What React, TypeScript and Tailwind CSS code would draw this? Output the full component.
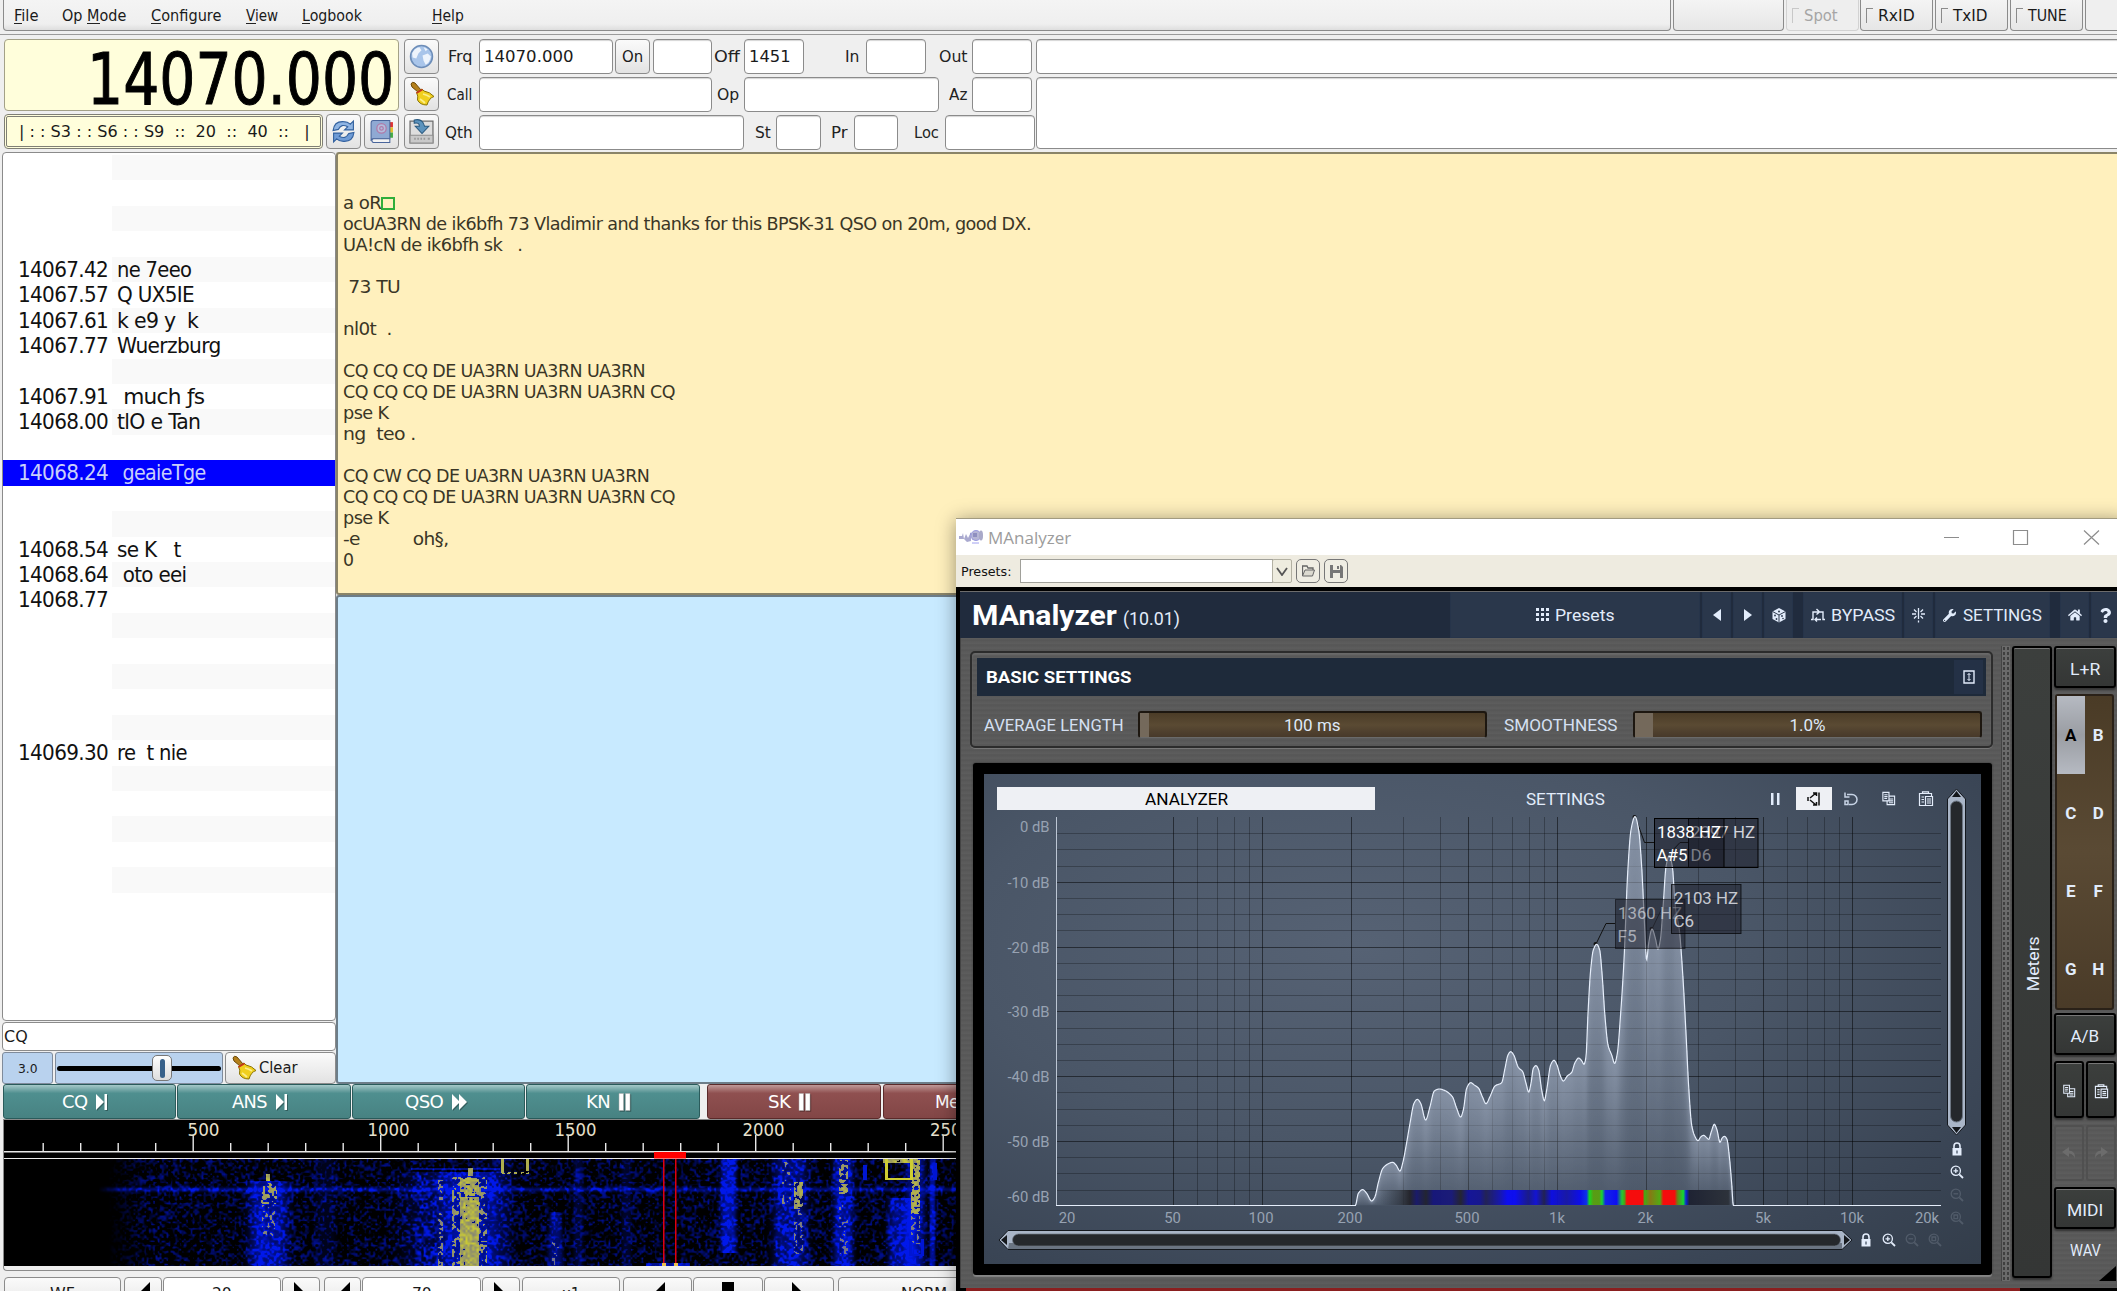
import React, { useLayoutEffect, useRef, useState, useEffect } from "react";
import { FaWrench, FaHome, FaQuestion } from "react-icons/fa";

/* Text squeezed or stretched horizontally to an exact advance width. */
function Fit({ w, children, className = "" }: { w: number; children: string; className?: string }) {
  const ref = useRef<HTMLSpanElement>(null);
  const [k, setK] = useState(1);
  useLayoutEffect(() => {
    if (ref.current) setK(w / ref.current.offsetWidth);
  }, [w, children]);
  return (
    <span className={`inline-block shrink-0 whitespace-pre ${className}`} style={{ width: w }}>
      <span ref={ref} className="inline-block origin-left" style={{ transform: `translateY(1px) scaleX(${k})` }}>
        {children}
      </span>
    </span>
  );
}

const raised = "border border-[#8b8b8b] rounded-[4px] bg-gradient-to-b from-[#fafafa] via-[#efefef] to-[#e2e2e2]";
const sunken = "border border-[#8b8b8b] rounded-[4px] bg-white shadow-[inset_0_2px_1px_-1px_#d5d5d5]";

function Broom({ className = "" }: { className?: string }) {
  return (
    <svg viewBox="0 0 26 26" className={className}>
      <path d="M2 3 Q3 0 6 2 L12 9 L9 11 L3 6 Z" fill="#b4801c" stroke="#6d4a08" strokeWidth="1" />
      <path d="M7.5 11.5 L13 8 L15 10 Q21 11 25 15.5 Q20 17 18 24 Q11 24 8.500 19 Q9.500 15 7.500 11.500Z" fill="#f0cf1e" stroke="#8a7405" strokeWidth="1" />
      <path d="M11 18 Q14 20 16 22 M14 13 Q18 14 21 16" stroke="#fbee8a" strokeWidth="1.800" fill="none" />
      <path d="M7.500 12 L13.500 8.500" stroke="#c8331c" strokeWidth="1.600" />
    </svg>
  );
}
function Globe() {
  return (
    <svg viewBox="0 0 24 24" className="size-[25px]">
      <circle cx="12" cy="12" r="10.500" fill="#a9c5ea" stroke="#6d8db8" strokeWidth="1.500" />
      <path d="M3 9 Q5 4 10 3 L12 6 L9 9 L7 14 L3.500 13Z M13 11 L18 9 L21 12 Q20 18 16 20 L14 16Z M14 3 L18 5 L16 7Z" fill="#eef4fc" />
    </svg>
  );
}
function Refresh() {
  return (
    <svg viewBox="0 0 24 24" className="size-[25px]">
      <path d="M2 11 Q3 2 12 2.500 Q16 2.500 18.500 5 L21.500 2 L21.500 10.500 L13 10.500 L16 7.500 Q10 4 7 10Z" fill="#8fb4e3" stroke="#33619f" strokeWidth="1.100" />
      <path d="M22 13 Q21 22 12 21.500 Q8 21.500 5.500 19 L2.500 22 L2.500 13.500 L11 13.500 L8 16.500 Q14 20 17 14Z" fill="#6f9bd6" stroke="#33619f" strokeWidth="1.100" />
    </svg>
  );
}
function Book() {
  return (
    <svg viewBox="0 0 24 24" className="size-[25px]">
      <path d="M20 3h3v5h-3z" fill="#d33" /><path d="M20 8h3v5h-3z" fill="#e6c02a" /><path d="M20 13h3v5h-3z" fill="#4a4" />
      <path d="M4 1.500 H20 V19 H4 Q2 19 2 21 V4 Q2 1.500 4 1.500Z" fill="#8fa9d3" stroke="#49659b" />
      <path d="M4 19 H20 V22.500 H4 Q1.500 21 4 19Z" fill="#f2f2f2" stroke="#49659b" />
      <circle cx="12" cy="9" r="4.500" fill="#b3bddd" stroke="#b07aa8" strokeWidth="1.200" />
      <circle cx="12" cy="9" r="1.700" fill="none" stroke="#b07aa8" strokeWidth="1.200" />
    </svg>
  );
}
function SaveDisk() {
  return (
    <svg viewBox="0 0 24 24" className="size-[25px]">
      <path d="M1 2 H23 V23 H1Z" fill="#dedede" stroke="#6e6e6e" strokeWidth="1.200" />
      <path d="M1 15.500 H23 V23 H1Z" fill="#c9c9c9" stroke="#8e8e8e" />
      <path d="M5 19h1.500M8 19h1.500M11 19h1.500M14 19h1.500M18 19h2" stroke="#999" strokeWidth="2" />
      <path d="M5 1 Q13 -1 15 7 H19 L12.500 14 L6 7 H10 Q10 3 5 4Z" fill="#5c93bd" stroke="#28587e" />
    </svg>
  );
}

const menu: [string, string, number, string][] = [
  ["F", "ile", 24, "ml-[10px]"],
  ["Op ", "Mode", 64, "ml-[24px]"],
  ["C", "onfigure", 70, "ml-[25px]"],
  ["V", "iew", 32, "ml-[25px]"],
  ["L", "ogbook", 60, "ml-[24px]"],
  ["H", "elp", 32, "ml-[70px]"],
];
const underlines = ["left-0 w-[8px]", "left-[25px] w-[13px]", "left-0 w-[10px]", "left-0 w-[10px]", "left-0 w-[8px]", "left-0 w-[10px]"];

function TopBar() {
  return (
    <div className="flex h-[31px] w-full shrink-0 pl-[3px] text-[15px] leading-[20px]">
      <div className="flex h-[31px] w-[1668px] shrink-0 items-center rounded-b-[4px] border border-t-0 border-[#8b8b8b] bg-gradient-to-b from-[#f4f4f4] via-[#efefef] via-80% to-[#dedede]">
        {menu.map(([a, b, w, ml], i) => (
          <span key={i} className={`relative flex ${ml}`}>
            <Fit w={w}>{a + b}</Fit>
            <span className={`absolute bottom-[1px] h-px bg-[#222] ${underlines[i]}`} />
          </span>
        ))}
      </div>
      <div className="ml-[2px] h-[31px] w-[111px] shrink-0 rounded-b-[4px] border border-t-0 border-[#8b8b8b] bg-gradient-to-b from-[#f4f4f4] to-[#e6e6e6]" />
      <Light c="ml-[2px]" label="Spot" w={34} off />
      <Light c="ml-[1px]" label="RxID" w={37} />
      <Light c="ml-[2px]" label="TxID" w={35} />
      <Light c="ml-[2px]" label="TUNE" w={39} />
      <div className="ml-[2px] h-[31px] w-[60px] shrink-0 rounded-b-[4px] border border-t-0 border-[#8b8b8b] bg-[#efefef]" />
    </div>
  );
}
function Light({ label, w, c, off = false }: { label: string; w: number; c: string; off?: boolean }) {
  return (
    <div className={`${c} flex h-[31px] w-[73px] shrink-0 items-center rounded-b-[4px] border border-t-0 pl-[5px] ${off ? "border-[#d2d2d2] bg-[#eeeeee] text-[#a5a5a5]" : "border-[#8b8b8b] bg-gradient-to-b from-[#f4f4f4] to-[#e6e6e6]"}`}>
      <span className={`mr-[5px] h-[15px] w-[7px] border-l border-t ${off ? "border-[#c8c8c8]" : "border-[#8b8b8b]"}`} />
      <Fit w={w}>{label}</Fit>
    </div>
  );
}

function L({ w, ml, children }: { w: number; ml: string; children: string }) {
  return <Fit w={w} className={`text-[15px] text-[#222] ${ml}`}>{children}</Fit>;
}
function Field({ c, w, children }: { c: string; w?: number; children?: string }) {
  return (
    <div className={`${sunken} ${c} flex h-[35px] shrink-0 items-center overflow-hidden pl-[4px] text-[15.500px]`}>
      {children && <Fit w={w!}>{children}</Fit>}
    </div>
  );
}
function IconBtn({ children }: { children: React.ReactNode }) {
  return <div className={`${raised} flex h-[35px] w-[35px] items-center justify-center`}>{children}</div>;
}

function RigPanel() {
  return (
    <div className="mt-[3px] flex h-[115px] shrink-0 border-t border-[#9a9a9a] pl-[4px] pt-[4px]">
      <div className="flex w-[395px] shrink-0 flex-col">
        <div className="flex h-[72px] items-center justify-end rounded-[4px] border border-[#a3a187] bg-[#fffedb] pr-[4px] pt-[6px] text-[72px] leading-[78px] text-black [-webkit-text-stroke:1px_black]">
          <Fit w={307}>14070.000</Fit>
        </div>
        <div className="mt-[3px] flex h-[35px] gap-[3px]">
          <div className="flex h-[35px] w-[319px] items-center rounded-[4px] border-[3px] border-double border-[#7f7f75] bg-[#fffedb] pl-[12px] text-[15px]">
            <Fit w={291}>{"| : : S3 : : S6 : : S9  ::  20  ::  40  ::   |"}</Fit>
          </div>
          <IconBtn><Refresh /></IconBtn>
          <IconBtn><Book /></IconBtn>
        </div>
      </div>
      <div className="ml-[5px] flex w-[35px] shrink-0 flex-col gap-[3px]">
        <IconBtn><Globe /></IconBtn>
        <IconBtn><Broom className="size-[26px]" /></IconBtn>
        <IconBtn><SaveDisk /></IconBtn>
      </div>
      <div className="flex w-[594px] shrink-0 flex-col gap-[3px]">
        <div className="flex items-center">
          <L w={25} ml="ml-[9px]">Frq</L><Field c="ml-[6px] w-[134px]" w={89}>14070.000</Field>
          <div className={`${raised} ml-[2px] flex h-[35px] w-[35px] items-center justify-center text-[15px]`}><Fit w={21}>On</Fit></div>
          <Field c="ml-[3px] w-[59px]" />
          <L w={26} ml="ml-[2px]">Off</L><Field c="ml-[4px] w-[60px]" w={41}>1451</Field>
          <L w={15} ml="ml-[41px]">In</L><Field c="ml-[6px] w-[60px]" />
          <L w={28} ml="ml-[13px]">Out</L><Field c="ml-[5px] w-[60px]" />
        </div>
        <div className="flex items-center">
          <L w={25} ml="ml-[8px]">Call</L><Field c="ml-[7px] w-[233px]" />
          <L w={22} ml="ml-[5px]">Op</L><Field c="ml-[5px] w-[195px]" />
          <L w={18} ml="ml-[10px]">Az</L><Field c="ml-[5px] w-[60px]" />
        </div>
        <div className="flex items-center">
          <L w={27} ml="ml-[6px]">Qth</L><Field c="ml-[7px] w-[265px]" />
          <L w={16} ml="ml-[11px]">St</L><Field c="ml-[5px] w-[45px]" />
          <L w={16} ml="ml-[10px]">Pr</L><Field c="ml-[7px] w-[44px]" />
          <L w={25} ml="ml-[16px]">Loc</L><Field c="ml-[6px] w-[90px]" />
        </div>
      </div>
      <div className="ml-[3px] flex w-[1100px] shrink-0 flex-col gap-[3px]">
        <div className={`${sunken} h-[35px]`} />
        <div className={`${sunken} h-[73px]`} />
      </div>
    </div>
  );
}

const list: Record<number, [string, string, number]> = {
  4: ["14067.42", "ne 7eeo", 74],
  5: ["14067.57", "Q UX5IE", 77],
  6: ["14067.61", "k e9 y  k", 81],
  7: ["14067.77", "Wuerzburg", 104],
  9: ["14067.91", " much ƒs", 87],
  10: ["14068.00", "tlO e Tan", 83],
  12: ["14068.24", " geaieTge", 88],
  15: ["14068.54", "se K   t", 64],
  16: ["14068.64", " oto eei", 69],
  17: ["14068.77", "", 0],
  23: ["14069.30", "re  t nie", 70],
};

function Channels() {
  return (
    <div className="flex w-[334px] shrink-0 flex-col">
      <div className="h-[869px] overflow-hidden rounded-[4px] border border-[#8b8b8b] bg-white pt-[2px] text-[20.500px] leading-[25px] tracking-[-0.03em]">
        {Array.from({ length: 30 }, (_, i) => {
          const r = list[i];
          return (
            <div key={i} className={`flex h-[25.450px] ${i === 12 ? "bg-[#0000ff] text-[#c9cffa]" : "text-[#111]"}`}>
              <div className="w-[109px] shrink-0 pl-[15px]">{r && <Fit w={90}>{r[0]}</Fit>}</div>
              <div className={`flex-1 pl-[5px] ${i % 2 === 0 && i !== 12 && i < 29 ? "bg-[#f9f9f9]" : ""}`}>{r && r[1] && <Fit w={r[2]}>{r[1]}</Fit>}</div>
            </div>
          );
        })}
      </div>
      <div className="mt-[1px] flex h-[29px] items-center rounded-[4px] border border-[#8b8b8b] bg-white pl-[1px] text-[15.500px]"><Fit w={24}>CQ</Fit></div>
      <div className="mt-[1px] flex h-[32px]">
        <div className="flex w-[51px] items-center justify-center rounded-[3px] border border-[#7f8b9b] bg-[#b9d2ee] text-[13px]"><Fit w={20}>3.0</Fit></div>
        <div className="ml-[2px] flex w-[168px] items-center rounded-[3px] border border-[#7f8b9b] bg-[#b9d2ee] px-[1px]">
          <div className="h-[5px] w-[95px] rounded-l-sm bg-black" />
          <div className="flex h-[26px] w-[20px] items-center justify-center rounded-[5px] border border-[#777] bg-gradient-to-b from-white to-[#ddd]"><div className="h-[19px] w-[5px] rounded-sm bg-[#38618a]" /></div>
          <div className="h-[5px] flex-1 rounded-r-sm bg-black" />
        </div>
        <div className={`${raised} ml-[2px] flex flex-1 items-center pl-[5px] text-[15.500px]`}><Broom className="mr-[2px] size-[26px]" /><Fit w={38}>Clear</Fit></div>
      </div>
    </div>
  );
}

const rx: [string, number][] = [
  ["ocUA3RN de ik6bfh 73 Vladimir and thanks for this BPSK-31 QSO on 20m, good DX.", 688],
  ["UA!cN de ik6bfh sk   .", 180], ["", 0], [" 73 TU", 57], ["", 0], ["nl0t  .", 49], ["", 0],
  ["CQ CQ CQ DE UA3RN UA3RN UA3RN", 302],
  ["CQ CQ CQ DE UA3RN UA3RN UA3RN CQ", 332],
  ["pse K", 46], ["ng  teo .", 73], ["", 0],
  ["CQ CW CQ DE UA3RN UA3RN UA3RN", 306],
  ["CQ CQ CQ DE UA3RN UA3RN UA3RN CQ", 332],
  ["pse K", 46], ["-e          oh§,", 105], ["0", 11],
];

function TextPanes() {
  return (
    <div className="flex flex-1 flex-col">
      <div className="h-[443px] rounded-l-[3px] border-2 border-r-0 border-[#8a8468] bg-[#fff0bd] pl-[5px] pt-[38px] text-[17.500px] leading-[21px] tracking-[-0.03em] text-[#3a3626]">
        <div className="flex h-[21px] items-center"><Fit w={38}>a oR</Fit><span className="mt-[2px] h-[13px] w-[14px] border-2 border-[#2fae3a]" /></div>
        {rx.map(([t, w], i) => <div key={i} className="h-[21px]">{t && <Fit w={w}>{t}</Fit>}</div>)}
      </div>
      <div className="flex-1 rounded-l-[3px] border-2 border-r-0 border-[#6d7d88] bg-[#c8eaff]" />
    </div>
  );
}

function Sym({ k }: { k: string }) {
  return (
    <svg viewBox="0 0 17 18" className="ml-[8px] h-[18px] w-[17px] shrink-0 overflow-visible drop-shadow-[1px_1px_0_rgba(0,0,0,0.3)]">
      {k === "next" && <path d="M1 1 L9 9 L1 17Z M9.500 1h2.500v16h-2.500z" fill="#fff" />}
      {k === "ff" && <path d="M1 1 L9 9 L1 17Z M8 1 L16 9 L8 17Z" fill="#fff" />}
      {k === "pause" && <path d="M1 0.500h4.500v17H1z M7.500 0.500H12v17H7.500z" fill="#fff" stroke="#aaa" strokeWidth=".5" />}
    </svg>
  );
}
function Macro({ c, t, w, k, red = false }: { c: string; t: string; w: number; k: string; red?: boolean }) {
  return (
    <div className={`${c} ${red ? "border-[#5b2a2a] from-[#c09a9a] via-[#8f5050] to-[#824646]" : "border-[#2a5b5b] from-[#a5c9c9] via-[#4f8f8f] to-[#478282]"} flex shrink-0 items-center justify-center rounded-[3px] border bg-gradient-to-b via-25% pr-[5px] text-[17.500px] tracking-[-0.03em] text-white`}>
      <Fit w={w}>{t}</Fit>{k ? <Sym k={k} /> : null}
    </div>
  );
}

/* Deterministic waterfall painted pixel by pixel. */
function Waterfall() {
  const ref = useRef<HTMLCanvasElement>(null);
  useEffect(() => {
    const cv = ref.current!;
    const g = cv.getContext("2d")!;
    const W = 960, H = 107;
    const im = g.createImageData(W, H);
    let s = 12345;
    const rnd = () => ((s = (s * 1664525 + 1013904223) >>> 0) / 4294967296);
    const noise: number[] = [];
    for (let i = 0; i < 480 * 54; i++) noise.push(rnd());
    const n = (x: number, y: number) => {
      const fx = x / 2.2, fy = y / 2.1, x0 = Math.floor(fx), y0 = Math.floor(fy), a = fx - x0, b = fy - y0;
      const q = (i: number, j: number) => noise[(j % 54) * 480 + (i % 480)];
      return (q(x0, y0) * (1 - a) + q(x0 + 1, y0) * a) * (1 - b) + (q(x0, y0 + 1) * (1 - a) + q(x0 + 1, y0 + 1) * a) * b;
    };
    const bell = (x: number, c: number, w: number) => Math.exp(-Math.pow(Math.abs(x - c) / w, 4));
    for (let y = 0; y < H; y++)
      for (let x = 0; x < W; x++) {
        const X = x + 4, r = n(x, y);
        const ramp = Math.min(1, Math.max(0, (X - 108) / 40));
        let b = ramp * Math.max(0, r - 0.42) * 1.1;
        let yel = 0;
        if (X > 98) b += 0.6 * Math.exp(-Math.pow((y - 30) / 2.2, 2)) * (0.6 + r * 0.6) * Math.min(1, (X - 98) / 20);
        if (y > 21) b += bell(X, 268, 19) * (0.45 + r * 0.5);
        b += bell(X, 325, 10) * 0.12;
        if (y > 12) b += bell(X, 452, 48) * (0.12 + r * 0.45) + bell(X, 468, 28) * 0.4;
        b += bell(X, 500, 12) * 0.15 + bell(X, 578, 5) * 0.2 + bell(X, 626, 5) * 0.18;
        if (y > 52) b += bell(X, 555, 3 + y / 20) * 0.45;
        if (y < 94) b += bell(X, 728, 8) * (0.5 + r * 0.5);
        b += bell(X, 790, 17) * (0.35 + r * 0.5) + bell(X, 843, 10) * (0.45 + r * 0.5);
        if (y > 38) b += bell(X, 902, 14) * (0.45 + r * 0.4);
        b += bell(X, 915, 10) * 0.5 + bell(X, 932, 3) * 0.6;
        if (y > 8 && y < 11 && X > 410 && X < 500) b += 0.5;
        if (y > 103 && X > 645 && X < 690) b += 0.6;
        const ring = (c: number, w: number, t: number, y0: number, y1: number, m = 1) => {
          if (Math.abs(X - c) < w && y > y0 && y < y1 && r > t) yel = Math.max(yel, (0.6 + r * 0.4) * m);
        };
        ring(267.5, 2, 0, 14, 22); ring(268, 9, 0.56, 23, 45, 0.85); ring(268, 7, 0.66, 45, 78, 0.7);
        ring(470, 3, 0, 8, 17); ring(469, 10, 0.2, 18, 33); ring(469, 6, 0.45, 30, 37); ring(469, 10, 0.14, 37, 107);
        ring(469, 18, 0.6, 17, 107, 0.8); ring(440, 3, 0.66, 20, 107, 0.7);
        ring(786, 5, 0.7, 2, 45, 0.7); ring(798, 5, 0.35, 22, 50, 0.9); ring(798, 5, 0.66, 50, 95, 0.65);
        ring(843, 5, 0.5, 0, 24, 0.85); ring(843, 5, 0.3, 24, 35, 0.95); ring(843, 5, 0.7, 45, 95, 0.6);
        ring(915, 5, 0.4, 0, 55, 0.95); ring(915, 5, 0.66, 55, 85, 0.65); ring(555, 4, 0.72, 80, 107, 0.6);
        ring(900, 18, 0.15, -1, 4);
        const box = (x0: number, x1: number, y0: number, y1: number) => X >= x0 && X <= x1 && y >= y0 && y <= y1 && (X < x0 + 3 || X > x1 - 3 || y > y1 - 2);
        if (box(501, 528, 0, 14) && (y < 12 || r > 0.6)) yel = 0.85;
        if (box(885, 912, 0, 20)) yel = 1;
        if (box(909, 923, 80, 96) || box(863, 866, 6, 20) || box(933, 936, 4, 20)) b = 0.9;
        b = Math.min(1, b);
        const o = (y * W + x) * 4;
        im.data[o] = yel ? 205 * yel : 0;
        im.data[o + 1] = yel ? 205 * yel : 24 * b;
        im.data[o + 2] = yel ? 50 + (1 - yel) * 190 : 235 * b;
        im.data[o + 3] = 255;
      }
    g.putImageData(im, 0, 0);
    g.fillStyle = "#e00010";
    g.fillRect(659, 0, 1.5, H);
    g.fillRect(671, 0, 1.5, H);
    g.fillStyle = "#e8c050";
    g.fillRect(658, 104, 4, 3);
    g.fillRect(670, 104, 4, 3);
  }, []);
  return <canvas ref={ref} width={960} height={107} className="block h-[107px] w-[960px]" />;
}

function Scale() {
  return (
    <svg width="960" height="39" className="block bg-black">
      {Array.from({ length: 25 }, (_, i) => {
        const x = 39 + i * 37.5, big = i % 5 === 4;
        return <rect key={i} x={x - 0.5} y={big ? 15 : 23} width="1.4" height={big ? 17 : 9} fill="#e8e8e8" />;
      })}
      {["500", "1000", "1500", "2000", "2500"].map((t, i) => (
        <text key={t} x={[183.500, 363.500, 550.500, 738.500, 926][i]} y="15.500" textLength={i ? 42 : 32} lengthAdjust="spacingAndGlyphs" fill="#e6e0cc" fontSize="18.500">{t}</text>
      ))}
      <rect y="31" width="960" height="1.500" fill="#e8e8e8" />
      <rect y="38" width="960" height="1" fill="#e8e8e8" />
      <rect x="650" y="32" width="32" height="6.500" fill="#f00" />
    </svg>
  );
}

function BBtn({ c, children }: { c: string; children?: React.ReactNode }) {
  return <div className={`${raised} ${c} flex h-[34px] shrink-0 items-start justify-center pt-[4px] text-[15.500px]`}>{children}</div>;
}
function Tri({ d = "M14 0 L0 14 L14 28Z" }: { d?: string }) {
  return <svg width="14" height="28" className="shrink-0"><path d={d} fill="#000" /></svg>;
}
const RT = "M0 0 L14 14 L0 28Z";

/* ---------- analyzer window ---------- */

const navy = "bg-[#2a374b] border border-[#26344a]";

function CopyI({ className = "" }: { className?: string }) {
  return (
    <svg viewBox="0 0 16 16" className={className} fill="none" stroke="#e4edfb" strokeWidth="1.200">
      <path d="M2 1.500H8.500V10.500H2Z M3.500 4H7M3.500 6H7M3.500 8H6.500" /><path d="M8.500 5.500H14.500V14.500H6.500V10.500 M8.500 8.500H13M8.500 10.500H13M8.500 12.500H13" />
    </svg>
  );
}
function PasteI({ className = "" }: { className?: string }) {
  return (
    <svg viewBox="0 0 16 16" className={className} fill="none" stroke="#e4edfb" strokeWidth="1.200">
      <path d="M7 14.500H1.500V2.500H13.500V5 M4.500 2.500V0.800H10.500V2.500 M3.500 6H6M3.500 8.500H6M3.500 11H6" /><path d="M7.500 5.500H14.500V14.500H7.500Z M9 8H13M9 10H13M9 12H13" />
    </svg>
  );
}
function ZoomI({ k, dim = false }: { k: string; dim?: boolean }) {
  return (
    <svg viewBox="0 0 14 14" className={`size-[14px] shrink-0 ${dim ? "opacity-15" : ""}`} fill="none" stroke="#e4edfb" strokeWidth="1.300">
      <circle cx="5.800" cy="5.800" r="4.600" /><path d="M9.300 9.300L13 13" strokeWidth="1.800" />
      {k === "in" && <path d="M3.500 5.800h4.600M5.800 3.500v4.600" />}
      {k === "out" && <path d="M3.500 5.800h4.600" />}
      {k === "fit" && <path d="M4 4h3.600v3.600H4z" />}
    </svg>
  );
}
function LockI() {
  return (
    <svg viewBox="0 0 14 14" className="size-[14px] shrink-0"><path d="M4 6V4a3 3 0 0 1 6 0v2" fill="none" stroke="#e4edfb" strokeWidth="1.600" /><path d="M2.500 6h9v7.500h-9z" fill="#e4edfb" /><path d="M6.400 8.500h1.200v3H6.400z" fill="#39465a" /></svg>
  );
}

function Title() {
  return (
    <div className="flex h-[36px] w-full shrink-0 items-center bg-white text-[#9c9c9c]">
      <svg width="26" height="18" className="ml-[3px]"><path d="M0 8h3l1-3 1 6 2-5 2 4 3-6v9l-4 1-3-3H0z" fill="#a9a9cf" /><path d="M11 6h3M13 11h3" stroke="#8080c8" /><circle cx="17" cy="7.500" r="5" fill="#b6b6d6" stroke="#9a9ae0" /><path d="M14 5h4v4h-4z" fill="#8f8fc0" /><ellipse cx="22" cy="7.500" rx="2" ry="5" fill="#a9a9c9" /><path d="M13 15h7" stroke="#a0a0f0" /></svg>
      <Fit w={83} className="ml-[3px] font-['Open_Sans',sans-serif] text-[17px] leading-[24px]">MAnalyzer</Fit>
      <svg width="160" height="20" className="ml-[872px]" fill="none" stroke="#8c8c8c" strokeWidth="1.200"><path d="M1 10.500h15 M70.500 3.500h14v14h-14z M141 3.500l15 14M156 3.500l-15 14" /></svg>
    </div>
  );
}
function PresetBar() {
  return (
    <div className="flex h-[32px] shrink-0 items-center bg-[#eeebe0] pl-[5px] text-[13px] text-[#111]">
      <Fit w={50} className="font-['DejaVu_Sans_Condensed','DejaVu_Sans',sans-serif]">Presets:</Fit>
      <div className="ml-[9px] h-[24px] w-[253px] border border-[#a0a09a] bg-white" />
      <div className="-ml-px flex h-[24px] w-[20px] items-center justify-center rounded-[2px] border border-[#b3b1a3] bg-[#eeecdf]"><svg width="12" height="9"><path d="M1 1L6 8L11 1" fill="none" stroke="#555" strokeWidth="1.800" /></svg></div>
      <div className="ml-[4px] flex h-[24px] w-[24px] items-center justify-center rounded-[5px] border border-[#777] bg-[#efede3]"><svg width="13" height="12"><path d="M0.500 11V1H5L6 3H11V5" fill="none" stroke="#666" strokeWidth="1.300" /><path d="M0.500 11L3 5H12.500L10.500 11Z" fill="#dcdad0" stroke="#666" /></svg></div>
      <div className="ml-[4px] flex h-[24px] w-[24px] items-center justify-center rounded-[5px] border border-[#777] bg-[#efede3]"><svg width="13" height="13"><path d="M0 0H11L13 2V13H0Z" fill="#777" /><path d="M3 0h7v5H3zM3 8h7v5H3z" fill="#efede3" /><path d="M7 1h2v3H7z" fill="#777" /></svg></div>
    </div>
  );
}
function Header() {
  return (
    <div className="flex h-[47px] shrink-0 items-stretch border-t border-[#6c6c6c] bg-[#202b3d] pl-[12px] text-[17px] text-[#e2ecfb]">
      <div className="flex w-[478px] shrink-0 items-center">
        <Fit w={145} className="text-[27px] font-bold text-white">MAnalyzer</Fit>
        <Fit w={57} className="ml-[6px] pt-[7px] text-[17.500px]">(10.01)</Fit>
      </div>
      <div className={`${navy} flex w-[250px] shrink-0 items-center pl-[85px]`}>
        <svg width="14" height="14" fill="#e2ecfb">{[0, 1, 2].map((r) => [0, 1, 2].map((c) => <rect key={`${r}${c}`} x={c * 5} y={r * 5} width="3" height="3" />))}</svg>
        <Fit w={59} className="ml-[5px]">Presets</Fit>
      </div>
      <div className={`${navy} ml-[2px] flex w-[29px] shrink-0 items-center justify-center`}><svg width="8" height="12"><path d="M8 0L0 6L8 12Z" fill="#e2ecfb" /></svg></div>
      <div className={`${navy} ml-[2px] flex w-[29px] shrink-0 items-center justify-center`}><svg width="8" height="12"><path d="M0 0L8 6L0 12Z" fill="#e2ecfb" /></svg></div>
      <div className={`${navy} ml-[2px] flex w-[29px] shrink-0 items-center justify-center`}>
        <svg width="14" height="15"><path d="M7 0L13.500 3.500V11L7 14.500L0.500 11V3.500Z" fill="#e2ecfb" /><path d="M0.500 3.500L7 7L13.500 3.500M7 7V14.500" stroke="#2a374b" fill="none" /><circle cx="7" cy="3.500" r="1" fill="#2a374b" /><circle cx="3" cy="7.500" r=".9" fill="#2a374b" /><circle cx="4.500" cy="11" r=".9" fill="#2a374b" /><circle cx="10" cy="8" r=".9" fill="#2a374b" /><circle cx="11" cy="10.500" r=".8" fill="#2a374b" /></svg>
      </div>
      <div className={`${navy} ml-[10px] flex w-[99px] shrink-0 items-center pl-[7px]`}>
        <svg width="14" height="14" fill="none" stroke="#e2ecfb" strokeWidth="1.400"><path d="M0 11.500H2V4H7.500M5.500 1L8.500 4L5.500 6.500M9 4H12V11.500H14M4 11.500H10M6 9.500L4 11.500L6 13.500" /></svg>
        <Fit w={64} className="ml-[6px]">BYPASS</Fit>
      </div>
      <div className={`${navy} ml-[2px] flex w-[29px] shrink-0 items-center justify-center`}><svg width="13" height="15" stroke="#e2ecfb" strokeWidth="1.300"><path d="M6.500 0v11M6.500 12.500v2M0 6h4M9 6h4M2 1.500l2.500 2.500M11 1.500l-2.500 2.500M2 10.500l2.500-2.500M11 10.500l-2.500-2.500" /></svg></div>
      <div className={`${navy} ml-[2px] flex w-[115px] shrink-0 items-center pl-[7px]`}><FaWrench className="size-[13px]" /><Fit w={79} className="ml-[7px]">SETTINGS</Fit></div>
      <div className={`${navy} ml-[10px] flex w-[29px] shrink-0 items-center justify-center`}><FaHome className="size-[14px]" /></div>
      <div className={`${navy} ml-[2px] flex w-[29px] shrink-0 items-center justify-center`}><FaQuestion className="size-[15px]" /></div>
    </div>
  );
}
const metal = "bg-[#595959] bg-[repeating-linear-gradient(180deg,rgba(255,255,255,0.03)_0px,rgba(0,0,0,0.03)_2px,rgba(255,255,255,0.02)_5px)]";

function Slider({ c, hc, t, w }: { c: string; hc: string; t: string; w: number }) {
  return (
    <div className={`${c} relative flex h-[27px] w-[349px] shrink-0 items-center justify-center rounded-[3px] border-2 border-b border-[#1d1710] border-b-[#6a6a6a] bg-gradient-to-b from-[#4b3c27] via-[#5a4a33] to-[#47392a] text-[17px] text-[#dfe9f8]`}>
      <div className={`${hc} absolute left-0 top-0 h-full bg-[#74695b]`} />
      <Fit w={w} className="relative">{t}</Fit>
    </div>
  );
}

const pts: [number, number][] = [[166,1276],[175,1240],[188,1229],[200,1240],[215,1263],[225,1250],[235,1208],[248,1166],[262,1153],[278,1147],[288,1155],[300,1173],[308,1150],[320,1088],[330,1030],[342,970],[352,958],[362,970],[377,1020],[390,980],[403,933],[418,927],[435,932],[457,950],[470,985],[482,1011],[490,990],[500,925],[512,908],[523,915],[536,925],[547,950],[558,971],[570,950],[585,918],[605,908],[615,865],[624,825],[632,815],[641,825],[655,862],[668,875],[678,910],[686,936],[693,910],[700,865],[708,857],[716,870],[725,930],[733,962],[740,930],[752,855],[762,841],[771,855],[780,885],[790,903],[802,888],[815,877],[825,848],[836,834],[845,842],[852,853],[858,830],[864,700],[872,570],[880,510],[890,493],[899,510],[906,580],[915,710],[924,795],[935,825],[944,850],[952,820],[962,700],[972,540],[983,280],[993,150],[1005,110],[1016,150],[1025,260],[1033,420],[1040,540],[1046,490],[1056,447],[1066,475],[1074,507],[1081,480],[1090,370],[1098,260],[1108,226],[1117,260],[1126,380],[1138,450],[1148,580],[1158,760],[1166,920],[1175,1035],[1185,1070],[1194,1082],[1203,1070],[1211,1066],[1220,1073],[1226,1078],[1234,1055],[1243,1033],[1251,1050],[1260,1087],[1266,1075],[1273,1069],[1281,1078],[1288,1130],[1295,1210],[1300,1276]]
  .map(([x, y]) => [x / 3 + 316, y / 3 + 6] as [number, number]);

/* Monotone cubic interpolation of the spectrum samples. */
const slopes = pts.map((p, i) => {
  if (i === 0 || i === pts.length - 1) return 0;
  const a = (p[1] - pts[i - 1][1]) / (p[0] - pts[i - 1][0]);
  const b = (pts[i + 1][1] - p[1]) / (pts[i + 1][0] - p[0]);
  return a * b <= 0 ? 0 : (2 * a * b) / (a + b);
});
function curve(x: number) {
  let i = 0;
  while (i < pts.length - 2 && x > pts[i + 1][0]) i++;
  const [x0, y0] = pts[i], [x1, y1] = pts[i + 1], h = x1 - x0, t = Math.min(1, Math.max(0, (x - x0) / h));
  const t2 = t * t, t3 = t2 * t;
  return y0 * (2 * t3 - 3 * t2 + 1) + slopes[i] * h * (t3 - 2 * t2 + t) + y1 * (3 * t2 - 2 * t3) + slopes[i + 1] * h * (t3 - t2);
}
const X0 = pts[0][0], X1 = pts[pts.length - 1][0];
const line = Array.from({ length: 757 }, (_, i) => X0 + (i * (X1 - X0)) / 756).map((x) => `${x.toFixed(2)},${curve(x).toFixed(2)}`).join(" L");
const fx = (f: number) => 72.5 + (295 * Math.log(f / 20)) / Math.LN10;
const heat: [number, string, number?][] = [[166,"#2b3542",0],[240,"#2b3542",0],[300,"#2a2f38",0.7],[330,"#222228"],[350,"#17176a"],[378,"#20222e"],[400,"#14147a"],[455,"#181878"],[482,"#22222e"],[505,"#12129a"],[540,"#141490"],[558,"#202054"],[600,"#1414b0"],[622,"#0a0af6"],[645,"#0a0af6"],[685,"#18188a"],[708,"#1010d8"],[732,"#202050"],[755,"#0a0ae6"],[800,"#1616a8"],[840,"#0a0af0"],[860,"#0a30f0"],[868,"#10e020"],[880,"#58a010"],[898,"#58a010"],[906,"#10e030"],[916,"#1020f0"],[950,"#0a0af8"],[966,"#20d030"],[974,"#50a010"],[980,"#ff0808"],[1028,"#ff0808"],[1034,"#40b010"],[1050,"#8a7a10"],[1080,"#50b010"],[1090,"#ff0808"],[1124,"#ff0808"],[1132,"#708010"],[1150,"#10e030"],[1158,"#0a20e0"],[1168,"#1c2030"],[1285,"#2b3038"],[1296,"#2b3038",0],[1300,"#2b3038",0]];

function Tag({ x, y, a, b, o, faint }: { x: number; y: number; a: string; b: string; o: number; faint: string }) {
  return (
    <g>
      <rect x={x} y={y} width="69.500" height="49" fill="rgba(20,20,32,0.45)" stroke="#000" strokeOpacity={o} />
      <text x={x + 2.500} y={y + 19.500} fontSize="17" fill={faint} textLength="64" lengthAdjust="spacingAndGlyphs">{a}</text>
      <text x={x + 2} y={y + 42.500} fontSize="17" fill={faint}>{b}</text>
    </g>
  );
}

/* Plot area: origin is the top-left corner of the blue screen. */
function Plot() {
  const B = 431.3;
  return (
    <svg width="963" height="456" className="absolute left-0 top-0 font-[Roboto,sans-serif]">
      <defs>
        <linearGradient id="col" x1="0" y1="0" x2="0" y2="1"><stop offset="0" stopColor="#b9c5da" stopOpacity=".58" /><stop offset=".5" stopColor="#b9c5da" stopOpacity=".3" /><stop offset="1" stopColor="#b9c5da" stopOpacity=".08" /></linearGradient>
        <linearGradient id="heat" gradientUnits="userSpaceOnUse" x1={X0} x2={X1} y1="0" y2="0">{heat.map(([x, c, o = 1], i) => <stop key={i} offset={(x - 166) / 1134} stopColor={c} stopOpacity={o} />)}</linearGradient>
      </defs>
      {Array.from({ length: 23 }, (_, i) => <rect key={i} x="72" y={Math.round(43 + 16.2 * (i + 1))} width="885" height="1" fill="#000" opacity={i % 4 === 3 ? 0.5 : 0.26} />)}
      {[50, 60, 70, 80, 90, 100, 200, 300, 400, 500, 600, 700, 800, 900, 1000, 2000, 3000, 4000, 5000, 6000, 7000, 8000, 9000, 10000].map((f) => (
        <rect key={f} x={Math.round(fx(f) - 0.5)} y="43" width="1" height="388" fill="#000" opacity={/^[125]0*$/.test(String(f)) ? 0.5 : 0.28} />
      ))}
      <rect x="72" y="43" width="1" height="388" fill="#bcc6d4" />
      {([["0 dB", 58], ["-10 dB", 114], ["-20 dB", 179], ["-30 dB", 243], ["-40 dB", 308], ["-50 dB", 373], ["-60 dB", 428]] as [string, number][]).map(([t, y]) => (
        <text key={t} x="65.500" y={y} textAnchor="end" fontSize="14.800" fill="#97a2b2">{t}</text>
      ))}
      {([["20", 83], ["50", 188.500], ["100", 277], ["200", 366], ["500", 483], ["1k", 573], ["2k", 661.500], ["5k", 779], ["10k", 868], ["20k", 943]] as [string, number][]).map(([t, x]) => (
        <text key={t} x={x} y="448.500" textAnchor="middle" fontSize="14.800" fill="#97a2b2">{t}</text>
      ))}
      <path d="M612 170 L622 149.500 H631" fill="none" stroke="#111" />
      <path d="M668 155 L678 134 H688" fill="none" stroke="#222" strokeOpacity=".7" />
      <path d="M651 42 L660.500 68.500 H670" fill="none" stroke="#111" />
      <path d="M686 79 L696 68.500 H704" fill="none" stroke="#111" />
      <circle cx="611.500" cy="170" r="2" fill="#111" /><circle cx="650.500" cy="43" r="2" fill="#111" /><circle cx="667.500" cy="155" r="2" fill="#222" />
      {Array.from({ length: 378 }, (_, i) => {
        const x = X0 + i, y = curve(x + 0.5);
        return <rect key={i} x={x} y={y} width="1.03" height={Math.max(0, B - y)} fill="url(#col)" />;
      })}
      <rect x="386" y="416" width="364" height="15" fill="url(#heat)" opacity=".95" />
      <path d={`M${line}`} fill="none" stroke="#e6eefb" strokeWidth="1.200" />
      <rect x="72" y="431" width="300" height="1" fill="#e6eefb" /><rect x="749" y="431" width="208" height="1" fill="#e6eefb" />
      <Tag x={631.5} y={125.5} a="1360 HZ" b="F5" o={0.5} faint="rgba(235,238,245,0.6)" />
      <Tag x={687.5} y={110.500} a="2103 HZ" b="C6" o={0.7} faint="rgba(240,242,248,0.8)" />
      <Tag x={704.5} y={44.500} a="2397 HZ" b="D6" o={1} faint="rgba(240,242,248,0.85)" />
      <Tag x={670.5} y={44.500} a="1838 HZ" b="A#5" o={1} faint="#ffffff" />
    </svg>
  );
}

function Screen() {
  return (
    <div className="ml-[12px] mt-[15px] h-[512px] w-[1019px] shrink-0 rounded-[3px] border-[11px] border-black bg-black shadow-[0_2px_1px_#858585,0_0_2px_#222]">
      <div className="relative flex h-full w-full flex-col bg-[#465263] bg-[radial-gradient(ellipse_at_38%_35%,#566274_0%,#4a5667_45%,#3a4555_80%,#333d4a_100%)] font-[Roboto,sans-serif] text-[17px] text-[#e2ecfb]">
        <Plot />
        <div className="relative ml-[13px] mt-[13px] flex h-[23px] items-center">
          <div className="flex h-[23px] w-[378px] shrink-0 items-center justify-center bg-[#eef0f4] text-black"><Fit w={83}>ANALYZER</Fit></div>
          <Fit w={79} className="ml-[151px]">SETTINGS</Fit>
          <svg width="9" height="12" className="ml-[166px] shrink-0"><path d="M0 0h2.500v12H0zM6 0h2.500v12H6z" fill="#e2ecfb" /></svg>
          <div className="ml-[16px] flex h-[23px] w-[36px] shrink-0 items-center justify-center bg-[#eef0f4]"><svg width="14" height="14" fill="none" stroke="#111" strokeWidth="1.500"><path d="M12 0.500v13M3 6L9 1M6 1h3.500v3M3 8l6 5M6 13h3.500v-3M1 5v4" /></svg></div>
          <svg width="14" height="14" className="ml-[12px] shrink-0" fill="none" stroke="#c7d3e5" strokeWidth="1.500"><path d="M5 12.500H8A5 5 0 0 0 8 2.500H3M1 0.500V5H5.500M1 9h3v3.500H1z" /></svg>
          <CopyI className="ml-[23px] size-[15px] shrink-0" />
          <PasteI className="ml-[22px] size-[16px] shrink-0" />
        </div>
        <div className="absolute left-[963px] top-[14px] flex w-[19px] flex-col items-center">
          <svg width="19" height="348"><path d="M9.500 1L18.500 11V337L9.500 347L0.500 337V11Z" fill="#a9b5c7" stroke="#14181e" /><path d="M9.500 3L14 9H5Z M9.500 345L14 339H5Z" fill="#15181c" /><rect x="3.500" y="13" width="12" height="321" rx="6" fill="#25282c" stroke="#6d7683" /></svg>
          <div className="mt-[6px] flex flex-col gap-[9px]"><LockI /><ZoomI k="in" /><ZoomI k="out" dim /><ZoomI k="fit" dim /></div>
        </div>
        <div className="mb-[14px] ml-[14px] mt-auto flex h-[20px] items-center">
          <svg width="855" height="20"><path d="M1 10L10 0.500H844L854 10L844 19.500H10Z" fill="#a9b5c7" stroke="#14181e" /><path d="M11 13 H844 V19 H10Z" fill="#6a7482" /><path d="M3 10L9 5V15Z M852 10L846 5V15Z" fill="#15181c" /><rect x="14.500" y="4" width="828" height="12" rx="6" fill="#25282c" stroke="#6d7683" strokeWidth=".7" /></svg>
          <div className="ml-[6px] flex gap-[9px]"><LockI /><ZoomI k="in" /><ZoomI k="out" dim /><ZoomI k="fit" dim /></div>
        </div>
      </div>
    </div>
  );
}

const dark = "rounded-[3px] border-2 border-black bg-gradient-to-b from-[#3c3f3d] to-[#343635] shadow-[inset_0_1px_0_#777,0_2px_2px_#333]";

function SideBar() {
  return (
    <div className="ml-[2px] mt-[8px] flex w-[62px] shrink-0 flex-col text-[17px] text-[#e2ecfb]">
      <div className={`${dark} flex h-[42px] items-center justify-center pt-[3px]`}><Fit w={30}>L+R</Fit></div>
      <div className="ml-px mt-[6px] grid h-[316px] w-[59px] grid-cols-2 grid-rows-4 rounded-[3px] border-2 border-[#2a2118] bg-gradient-to-b from-[#4a3b26] via-[#5a4a34] to-[#4a3b28] font-bold">
        {"ABCDEFGH".split("").map((c) => (
          <div key={c} className={`flex items-center justify-center pt-[2px] ${c === "A" ? "bg-gradient-to-b from-[#b6bac2] via-[#9a9da3] to-[#b6bac2] text-black" : ""}`}>{c}</div>
        ))}
      </div>
      <div className={`${dark} mt-[3px] flex h-[42px] items-center justify-center pt-[3px]`}><Fit w={29}>A/B</Fit></div>
      <div className="mt-[6px] flex gap-[2px]">
        <div className={`${dark} flex h-[57px] flex-1 items-center justify-center pt-[3px]`}><CopyI className="size-[14px]" /></div>
        <div className={`${dark} flex h-[57px] flex-1 items-center justify-center pt-[3px]`}><PasteI className="size-[15px]" /></div>
      </div>
      <div className="mt-[7px] flex gap-[2px]">
        {["M7 0L0 5L7 10V6.500Q12 7 13 12Q14 4 7 3.500Z", "M7 0L14 5L7 10V6.500Q2 7 1 12Q0 4 7 3.500Z"].map((d) => (
          <div key={d} className="flex h-[56px] flex-1 items-center justify-center rounded-[3px] border-2 border-[#505050]"><svg width="14" height="12"><path d={d} fill="#6c6c6c" /></svg></div>
        ))}
      </div>
      <div className={`${dark} mt-[6px] flex h-[42px] items-center justify-center pt-[3px]`}><Fit w={36}>MIDI</Fit></div>
      <div className="mt-[10px] flex h-[22px] items-center justify-center text-[16px]"><Fit w={31}>WAV</Fit></div>
      <svg width="17" height="15" className="ml-auto mt-[5px]"><path d="M17 0V15H0Z" fill="#000" /></svg>
    </div>
  );
}

function Analyzer() {
  return (
    <div className="absolute left-[956px] top-[518px] flex h-[790px] w-[1170px] flex-col border-t border-[#a29b80] bg-white shadow-[0_2px_18px_rgba(0,0,0,0.4)]">
      <Title />
      <PresetBar />
      <div className="flex flex-1 flex-col border-l-4 border-t-4 border-black font-[Roboto,sans-serif]">
        <Header />
        <div className={`${metal} flex h-[650px] shrink-0 border-l border-[#444]`}>
          <div className="flex w-[1032px] shrink-0 flex-col">
            <div className="ml-[9px] mt-[13px] h-[97px] w-[1023px] shrink-0 rounded-[5px] border-2 border-[#2c2c2c] p-[5px] shadow-[inset_0_2px_2px_#6a6a6a,0_1px_0_#777]">
              <div className="flex h-[38px] items-center bg-[#1e2a3a] pl-[9px] text-[17px] font-bold text-white">
                <Fit w={145}>BASIC SETTINGS</Fit>
                <div className="ml-auto mr-[3px] flex h-[34px] w-[29px] items-center justify-center bg-[#243146]"><svg width="12" height="14" fill="none" stroke="#e2ecfb"><path d="M1 1h10v12H1z" strokeWidth="1.400" /><path d="M6 3.500v7M4.500 5L6 3.500L7.500 5M4.500 9L6 10.500L7.500 9" /></svg></div>
              </div>
              <div className="mt-[15px] flex items-center pl-[7px] text-[17px] text-[#d5e0f2]">
                <Fit w={140}>AVERAGE LENGTH</Fit>
                <Slider c="ml-[14px]" hc="w-[9px]" t="100 ms" w={57} />
                <Fit w={113} className="ml-[17px]">SMOOTHNESS</Fit>
                <Slider c="ml-[16px]" hc="w-[18px]" t="1.0%" w={36} />
              </div>
            </div>
            <Screen />
          </div>
          <div className="ml-[8px] mt-[8px] h-[635px] w-[9px] shrink-0 border-l border-[#444] bg-[#6a6a6a] bg-[radial-gradient(#3f3f3f_1px,transparent_1.500px)] bg-[size:4px_5px]" />
          <div className={`${dark} ml-[2px] mt-[8px] flex h-[632px] w-[40px] shrink-0 items-center justify-center text-[17px] text-[#e2ecfb]`}>
            <div className="-rotate-90 pr-[4px]"><Fit w={55}>Meters</Fit></div>
          </div>
          <SideBar />
        </div>
        <div className="flex h-[10px] shrink-0 bg-black pl-[6px]"><div className="h-[10px] w-[1054px] bg-[#8a1f1f]" /></div>
      </div>
    </div>
  );
}

export default function App() {
  return (
    <div className="relative flex h-[1291px] w-[2117px] flex-col overflow-hidden bg-[#efefef] font-['DejaVu_Sans_Condensed','DejaVu_Sans',sans-serif] text-[#1a1a1a]">
      <TopBar />
      <RigPanel />
      <div className="mt-[3px] flex h-[932px] shrink-0 pl-[2px]">
        <Channels />
        <TextPanes />
      </div>
      <div className="flex h-[35px] shrink-0 pl-[3px]">
        <Macro c="w-[173px]" t="CQ" w={25} k="next" />
        <Macro c="ml-px w-[174px]" t="ANS" w={35} k="next" />
        <Macro c="ml-px w-[173px]" t="QSO" w={38} k="ff" />
        <Macro c="ml-px w-[174px]" t="KN" w={24} k="pause" />
        <Macro c="ml-[7px] w-[174px]" t="SK" w={22} k="pause" red />
        <Macro c="ml-[2px] w-[174px]" t="Mem" w={40} k="pause" red />
      </div>
      <div className="ml-[3px] shrink-0 border border-b-0 border-[#8b8b8b]">
        <Scale />
        <Waterfall />
      </div>
      <div className="ml-[3px] h-[5px] shrink-0 rounded-b-[4px] border-b border-l border-[#8b8b8b]" />
      <div className="mt-[6px] flex shrink-0 pl-[4px]">
        <BBtn c="w-[117px]"><Fit w={25}>WF</Fit></BBtn>
        <BBtn c="ml-[3px] w-[38px]"><Tri /></BBtn>
        <BBtn c="ml-px w-[118px] bg-none bg-white"><Fit w={20}>20</Fit></BBtn>
        <BBtn c="ml-px w-[38px]"><Tri d={RT} /></BBtn>
        <BBtn c="ml-[4px] w-[37px]"><Tri /></BBtn>
        <BBtn c="ml-px w-[119px] bg-none bg-white"><Fit w={20}>70</Fit></BBtn>
        <BBtn c="ml-px w-[38px]"><Tri d={RT} /></BBtn>
        <BBtn c="ml-[2px] w-[98px]"><Fit w={18}>x1</Fit></BBtn>
        <BBtn c="ml-[3px] w-[69px]"><Tri /></BBtn>
        <BBtn c="ml-px w-[70px]"><Tri d="M1 0h12v28H1z" /></BBtn>
        <BBtn c="ml-px w-[70px]"><Tri d={RT} /></BBtn>
        <BBtn c="ml-[4px] w-[172px]"><Fit w={46}>NORM</Fit></BBtn>
      </div>
      <Analyzer />
    </div>
  );
}
